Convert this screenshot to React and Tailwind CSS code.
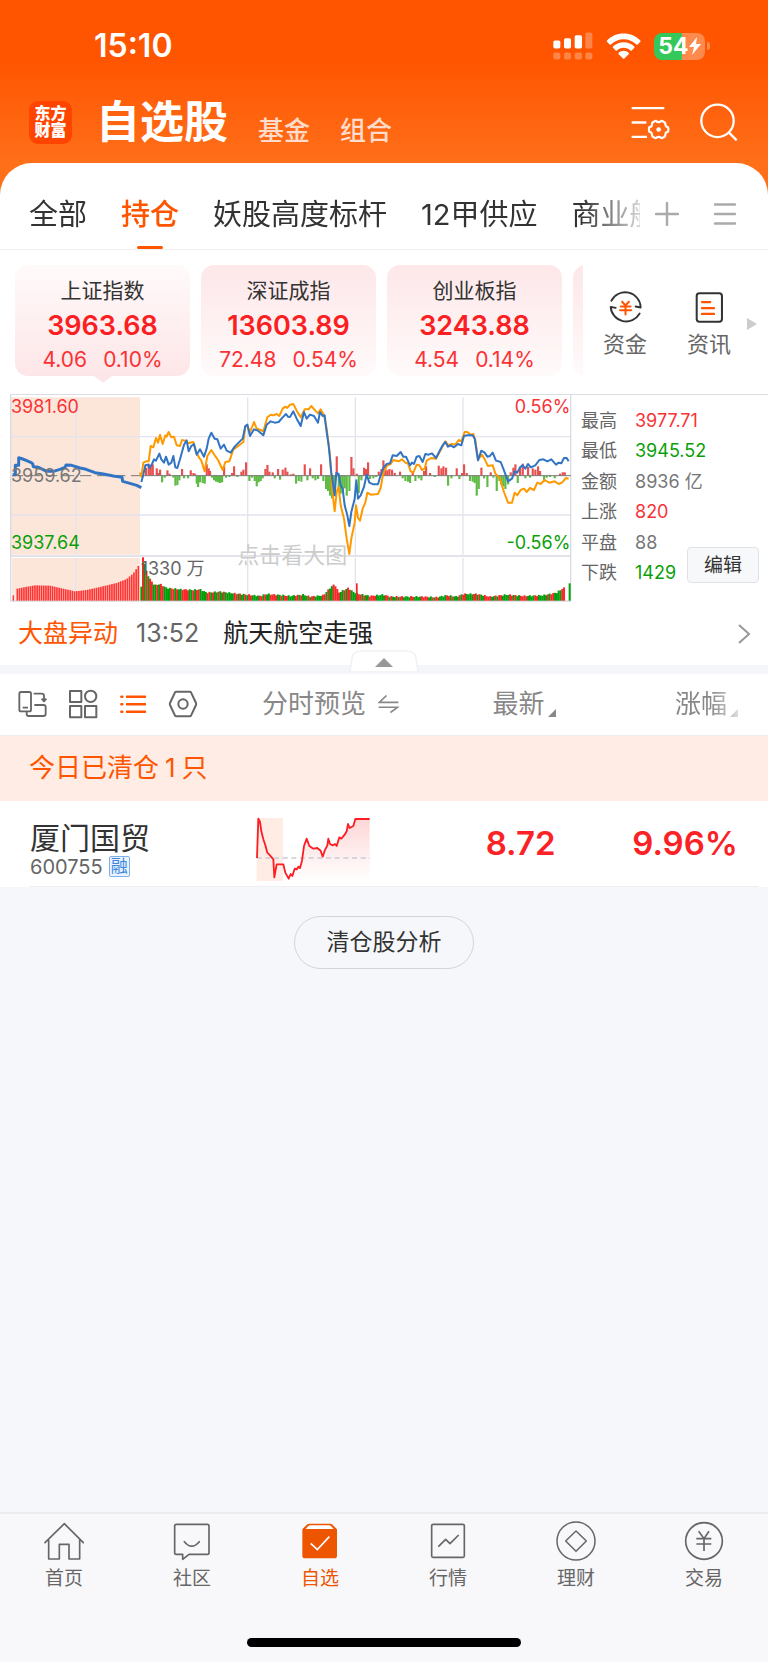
import React from "react";

function Drawing({ box, className, children, ...rest }) {
  return (
    <svg viewBox={box} className={className} fill="none" aria-hidden="true" {...rest}>
      {children}
    </svg>
  );
}

/* ---------- header ---------- */

function StatusBar() {
  return (
    <div className="flex h-[92px] items-center justify-between pr-[58px] pl-[94px] text-white">
      <span className="text-[32px] leading-none font-semibold">15:10</span>
      <div className="flex items-center gap-[13px]">
        <Drawing box="506 95 120 83" className="h-7 w-10" fill="#fff">
          <g fill="#fff">
            <rect x="507" y="120" width="21" height="24" rx="5" />
            <rect x="539" y="113" width="21" height="31" rx="5" />
            <rect x="571" y="104" width="22" height="40" rx="5" />
            <g opacity=".28">
              <rect x="603" y="96" width="21" height="48" rx="5" />
              <rect x="507" y="156" width="21" height="21" rx="6" />
              <rect x="539" y="156" width="21" height="21" rx="6" />
              <rect x="571" y="156" width="22" height="21" rx="6" />
              <rect x="603" y="156" width="21" height="21" rx="6" />
            </g>
          </g>
        </Drawing>
        <Drawing box="664 96 105 80" className="h-[27px] w-[35px]">
          <g fill="#fff">
            <path d="M717 97c20 0 38 8 50 21 1 1 1 3 0 4l-8 8c-1 1-3 1-4 0-10-10-23-16-38-16s-28 6-38 16c-1 1-3 1-4 0l-8-8c-1-1-1-3 0-4 12-13 30-21 50-21z" />
            <path d="M717 123c13 0 24 5 32 13 1 1 1 3 0 4l-8 8c-1 1-3 1-4 0-5-5-12-8-20-8s-15 3-20 8c-1 1-3 1-4 0l-8-8c-1-1-1-3 0-4 8-8 19-13 32-13z" />
            <path d="M717 149c6 0 11 2 15 6 1 1 1 3 0 4l-13 13c-1 1-3 1-4 0l-13-13c-1-1-1-3 0-4 4-4 9-6 15-6z" />
          </g>
        </Drawing>
        <div className="flex items-center gap-0.5">
          <div className="flex h-[27px] w-[51px] items-center justify-center rounded-lg bg-[linear-gradient(90deg,#34c759_54%,#ff8a4d_54%)]">
            <span className="text-[23px] leading-none font-bold">54</span>
            <Drawing box="0 0 12 18" className="h-[18px] w-3">
              <path d="M8 0 0 10h5l-2 8 9-11H7z" fill="#fff" />
            </Drawing>
          </div>
          <span className="h-2 w-[3px] rounded-r-full bg-[#ff8a4d]" />
        </div>
      </div>
    </div>
  );
}

function TitleBar() {
  return (
    <header className="mb-[11px] flex h-[60px] items-center pr-[30px] pl-[29px] text-white">
      <a
        href="#home"
        className="flex size-[43px] flex-col items-center justify-center rounded-[9px] bg-[#ff4400] text-[16px] leading-[17px] font-black"
      >
        <span>东方</span>
        <span>财富</span>
      </a>
      <nav className="ml-6 flex items-end gap-[30px]">
        <h1 className="text-[44px] leading-[44px] font-bold">自选股</h1>
        <a href="#funds" className="text-[26px] leading-[26px] font-medium text-[#ffdccb]">基金</a>
        <a href="#groups" className="text-[26px] leading-[26px] font-medium text-[#ffdccb]">组合</a>
      </nav>
      <div className="ml-auto flex items-center gap-[30px]">
        <button aria-label="设置">
          <Drawing box="740 312 117 110" className="h-[37px] w-[39px]">
            <g stroke="#fff" strokeWidth="7">
              <path d="M742 324h98M742 367h44M742 410h46" />
              <path
                strokeLinejoin="round"
                strokeWidth="6.5"
                d="M811 363q4-2 6 1 6 4 12 0 2-3 6-1l6 4q3 2 2 6 1 6 5 7 4 0 4 4v8q0 4-4 4-5 1-5 7 1 4-2 6l-6 4q-4 2-6-1-6-4-12 0-2 3-6 1l-6-4q-3-2-2-6-1-6-5-7-4 0-4-4v-8q0-4 4-4 5-1 5-7-1-4 2-6z"
              />
            </g>
            <circle cx="823" cy="388" r="7" fill="#fff" />
          </Drawing>
        </button>
        <button aria-label="搜索">
          <Drawing box="945 307 115 115" className="size-[38px]">
            <g stroke="#fff" strokeWidth="7">
              <circle cx="998" cy="361" r="49" />
              <path d="m1032 396 24 24" />
            </g>
          </Drawing>
        </button>
      </div>
    </header>
  );
}

const groups = ["全部", "持仓", "妖股高度标杆", "12甲供应", "商业航天"];

function GroupTabs() {
  return (
    <div className="flex h-[87px] items-stretch rounded-t-[32px] border-b border-[#f0f0f0] bg-white pt-4 pr-[31px]">
      <nav className="flex min-w-0 flex-1 gap-[34px] overflow-hidden pl-[29px] [mask-image:linear-gradient(90deg,#000_91%,rgba(0,0,0,0.2))]">
        {groups.map((name, i) => (
          <button
            key={name}
            className={
              i === 1
                ? "relative shrink-0 text-[29px] leading-none font-medium text-[#ff5500]"
                : "shrink-0 text-[29px] leading-none whitespace-nowrap text-[#333]"
            }
          >
            {name}
            {i === 1 && (
              <span className="absolute bottom-0 left-1/2 h-[3px] w-[26px] -translate-x-1/2 rounded-full bg-[#ff5500]" />
            )}
          </button>
        ))}
      </nav>
      <div className="flex items-center gap-[34px] pl-[15px]">
        <button aria-label="添加分组">
          <Drawing box="0 0 24 24" className="size-6">
            <path d="M12 1v22M1 12h22" stroke="#aaa" strokeWidth="2.4" strokeLinecap="round" />
          </Drawing>
        </button>
        <button aria-label="分组列表">
          <Drawing box="0 0 24 24" className="size-6">
            <path d="M2 2.500h20M2 12h20M2 21.500h20" stroke="#aaa" strokeWidth="2.4" strokeLinecap="round" />
          </Drawing>
        </button>
      </div>
    </div>
  );
}

/* ---------- indices ---------- */

const indices = [
  { name: "上证指数", value: "3963.68", diff: "4.06", pct: "0.10%" },
  { name: "深证成指", value: "13603.89", diff: "72.48", pct: "0.54%" },
  { name: "创业板指", value: "3243.88", diff: "4.54", pct: "0.14%" },
];

function IndexCards() {
  return (
    <section className="flex">
      <div className="flex min-w-0 flex-1 gap-[11px] overflow-hidden pt-[15px] pb-[18px] pl-[15px]">
        {indices.map((item, i) => (
          <button
            key={item.name}
            className={
              i === 0
                ? "relative h-[111px] w-[175px] shrink-0 rounded-[13px] bg-linear-to-b from-[#fffafa] to-[#fde6e8] pt-2"
                : "relative h-[111px] w-[175px] shrink-0 rounded-[13px] bg-linear-to-b from-[#fde7e9] to-[#fffafa] pt-2"
            }
          >
            <span className="block text-[21px] leading-[30px] text-[#333]">{item.name}</span>
            <span className="block text-[27px] leading-10 font-semibold text-[#f91f22]">{item.value}</span>
            <span className="flex justify-center gap-4 text-[21px] leading-7 text-[#fa3236]">
              <span>{item.diff}</span>
              <span>{item.pct}</span>
            </span>
            {i === 0 && (
              <Drawing box="0 0 18 7" className="absolute top-full left-1/2 h-[7px] w-[18px] -translate-x-1/2">
                <path d="M0 0h18L10 6q-1 1-2 0z" fill="#fde6e8" />
              </Drawing>
            )}
          </button>
        ))}
        <div className="h-[111px] w-[175px] shrink-0 rounded-[13px] bg-linear-to-b from-[#fde7e9] to-[#fffafa]" />
      </div>
      <div className="flex w-[185px] items-center pt-1 text-[22px] leading-7 text-[#666]">
        <button className="flex w-[84px] flex-col items-center gap-1.5">
          <Drawing box="674 109 98 98" className="size-[33px]">
            <g stroke="#333" strokeWidth="5.500" strokeLinecap="round" strokeLinejoin="round">
              <path d="M681 138a46 46 0 0 1 87 20l-15-3" />
              <path d="M765 176a46 46 0 0 1-86-20l15 3" />
            </g>
            <path d="m713 141 10 11 10-11M709 155h29M707 166h33M723 152v27" stroke="#ff5500" strokeWidth="6" strokeLinecap="round" />
          </Drawing>
          资金
        </button>
        <button className="flex w-[84px] flex-col items-center gap-1.5">
          <Drawing box="928 109 98 98" className="size-[33px]">
            <rect x="939" y="116" width="75" height="84" rx="8" stroke="#333" strokeWidth="6" />
            <path d="M955 142h24M955 160h35M955 177h35" stroke="#ff5500" strokeWidth="7" strokeLinecap="round" />
          </Drawing>
          资讯
        </button>
        <Drawing box="0 0 10 12" className="-ml-1 h-3 w-2.5">
          <path d="M0 0v12l10-6z" fill="#ccc" />
        </Drawing>
      </div>
    </section>
  );
}

/* ---------- intraday chart ---------- */

const preOpen =
  "38,268 46,268 46,240 56,240 56,217 68,221 80,226 92,231 98,235 100,244 115,246 128,252 140,258 160,258 180,252 195,246 198,239 215,240 240,248 258,252 285,262 310,266 340,272 366,276 368,288 390,294 410,300 424,307";

const indexLine =
  "424,290 430,268 436,240 444,238 448,248 456,236 462,222 468,226 478,205 484,222 492,232 498,214 506,238 514,232 520,212 526,246 532,248 540,222 546,200 552,178 560,165 566,198 574,182 582,176 590,208 600,192 612,214 620,190 626,160 634,142 644,160 652,162 662,190 672,178 680,196 692,202 704,184 716,172 728,160 736,122 742,118 750,152 762,132 774,136 790,150 800,118 812,108 824,112 836,110 848,96 858,86 864,94 870,95 880,78 890,100 902,122 912,80 920,100 930,88 942,92 954,112 960,80 968,92 974,90 980,140 986,180 994,262 1004,330 1009,262 1016,266 1022,300 1028,310 1034,360 1042,390 1048,422 1054,380 1064,340 1069,285 1074,340 1082,330 1092,305 1100,268 1108,292 1120,297 1134,297 1142,270 1150,248 1160,236 1170,234 1178,210 1190,212 1202,200 1210,214 1218,214 1230,240 1236,232 1242,236 1250,214 1258,212 1268,230 1276,206 1286,208 1296,204 1308,218 1320,195 1328,180 1336,170 1344,184 1352,180 1362,186 1374,176 1384,180 1392,152 1402,150 1418,150 1424,160 1434,225 1444,196 1454,202 1462,214 1470,212 1478,202 1488,226 1502,230 1510,250 1524,288 1536,280 1544,258 1552,262 1560,246 1568,240 1576,250 1584,236 1592,246 1606,240 1618,224 1630,222 1642,228 1654,222 1668,238 1676,232 1684,234 1692,218 1700,218 1706,228";

const leadLine =
  "420,262 424,274 430,232 438,228 446,228 452,182 460,186 468,158 474,172 480,148 488,176 496,150 500,154 506,140 514,156 522,154 530,180 540,182 546,164 556,166 564,174 580,170 588,200 598,218 604,226 614,258 622,212 634,194 644,210 654,224 668,254 676,230 688,228 700,192 712,184 722,176 730,170 736,124 742,120 750,140 762,110 770,130 782,134 790,138 802,96 812,88 820,90 830,86 838,92 848,70 856,64 862,68 870,58 880,56 890,76 902,96 914,72 926,72 934,62 946,76 954,84 962,72 972,90 980,130 990,210 996,310 1004,378 1010,320 1016,305 1022,360 1032,400 1040,460 1048,506 1054,460 1064,412 1068,360 1074,398 1080,406 1088,370 1096,352 1102,322 1112,328 1134,326 1142,308 1150,262 1162,240 1172,236 1180,224 1196,228 1206,222 1216,232 1224,234 1232,258 1240,262 1250,238 1258,240 1266,254 1274,250 1280,226 1294,218 1308,220 1322,194 1336,168 1346,180 1356,176 1366,178 1376,164 1384,168 1394,140 1402,140 1412,148 1420,146 1426,164 1434,222 1446,208 1454,222 1464,242 1478,240 1486,264 1500,280 1512,320 1524,352 1536,352 1544,322 1552,330 1562,314 1572,310 1580,320 1590,308 1602,314 1612,292 1622,296 1634,284 1648,292 1664,288 1676,296 1686,292 1698,278 1706,280";

// [x, height]: positive heights rise above the zero line, negative ones fall below it
const momentum = [
  [438, 24], [446, 36], [452, 30], [458, 34], [470, 22], [474, 8], [480, 18], [486, -20], [494, -6], [502, 16], [508, 6],
  [520, -6], [526, -30], [532, -28], [538, -14], [546, 20], [552, -8], [564, -8], [572, 16], [580, 8], [584, 6],
  [590, -24], [594, -34], [600, -20], [608, -22], [614, -24], [620, 34], [626, 22], [630, 14], [636, -6], [642, -14],
  [648, -18], [654, -20], [660, -22], [666, -20], [672, 28], [678, -6], [688, -4], [696, 8], [702, 28], [712, -4],
  [724, 12], [730, 18], [738, 40], [748, -16], [756, -6], [764, -16], [770, -32], [776, -20], [782, -16], [788, -8],
  [796, 20], [802, 32], [808, 12], [818, 10], [824, -8], [834, 20], [840, -12], [848, 18], [856, 24], [862, 12],
  [872, 4], [880, 6], [888, -24], [896, -16], [904, -18], [914, 34], [922, -14], [930, 22], [938, -8], [946, -14],
  [954, -10], [963, 34], [970, -16], [978, -40], [984, -46], [990, -60], [996, -68], [1002, -60], [1010, 58], [1016, -40],
  [1022, -54], [1028, -44], [1034, -38], [1040, -60], [1048, -46], [1054, 56], [1060, 22], [1070, 6], [1076, -52], [1084, -14],
  [1092, 24], [1098, 20], [1104, 40], [1110, -10], [1120, -8], [1128, -4], [1136, 12], [1144, 20], [1150, 46], [1156, 30],
  [1162, 16], [1168, 20], [1176, 18], [1184, 8], [1200, 12], [1208, -8], [1216, -16], [1224, -18], [1230, -22], [1238, 10],
  [1246, -16], [1256, -8], [1264, -14], [1272, 14], [1278, 28], [1290, 8], [1304, -4], [1316, 30], [1324, 22], [1330, 28],
  [1338, 24], [1344, -30], [1354, -8], [1370, 22], [1378, -10], [1386, 8], [1392, 34], [1400, 8], [1410, -16], [1418, -18],
  [1424, -22], [1430, -60], [1436, -40], [1444, 24], [1452, -8], [1462, -34], [1472, 10], [1480, -6], [1490, -46],
  [1498, -16], [1504, -28], [1510, -32], [1516, -40], [1524, -26], [1532, 10], [1540, 24], [1546, 34], [1553, -22],
  [1560, 24], [1568, 36], [1576, -8], [1584, 26], [1590, -6], [1598, 22], [1606, 18], [1614, 28], [1620, 14], [1632, -18],
  [1640, -6], [1650, -4], [1664, -8], [1680, 6], [1688, 10], [1694, 10],
];

const preVolume = [[52, 36], [76, 41], [105, 46], [150, 45], [190, 36], [225, 28], [260, 32], [300, 41], [350, 53], [380, 65], [400, 82], [415, 104]];

const volume = [
  [434, 110], [440, 86], [448, 68], [456, 56], [464, 46], [480, 50], [500, 38], [540, 34], [580, 32], [600, 34], [620, 24],
  [660, 27], [700, 22], [740, 18], [780, 14], [800, 20], [850, 16], [870, 14], [910, 18], [930, 12], [970, 16], [990, 38],
  [1004, 50], [1016, 24], [1045, 38], [1060, 26], [1076, 20], [1110, 14], [1150, 18], [1170, 12], [1270, 12], [1310, 10],
  [1340, 16], [1370, 12], [1390, 20], [1430, 20], [1470, 12], [1520, 18], [1570, 14], [1630, 16], [1670, 24], [1690, 38],
];

function valueAt(points, x) {
  for (let i = 1; i < points.length; i += 1) {
    const [x0, y0] = points[i - 1];
    const [x1, y1] = points[i];
    if (x <= x1) return y0 + ((y1 - y0) * (x - x0)) / (x1 - x0);
  }
  return points[points.length - 1][1];
}

const steps = (from, to, step) =>
  Array.from({ length: Math.floor((to - from) / step) + 1 }, (_, i) => from + i * step);

function IntradayChart() {
  return (
    <svg viewBox="30 29 1686 623" className="block min-w-0 flex-1" fill="none" role="img" aria-label="上证指数分时图">
      <path d="M32 36h388v472H32zM36 518h384v128H36z" fill="#fce6da" />
      <g stroke="#e4e4ee" strokeWidth="4">
        <path d="M32 154H1713M32 389H1713M227 36V508M227 518V646M743 36V508M743 518V646M1066 36V508M1066 518V646M1389 36V508M1389 518V646" />
        <path d="M32 27V648M1712 27V648M32 512H1713M32 647H1713" stroke="#d9dbe2" />
      </g>
      <text x="712" y="534" fontSize="66" fill="#ccc">点击看大图</text>

      {momentum.map(([x, h]) => (
        <rect key={x} x={x - 3} y={h > 0 ? 271 - h : 271} width="6.500" height={Math.abs(h)} fill={h > 0 ? "#e84f4f" : "#5fbb46"} />
      ))}
      <path d="M425 271H1713" stroke="#777" strokeWidth="3" />
      <path d="M36 271H420" stroke="#777" strokeWidth="3" strokeDasharray="34 17" />

      {steps(52, 415, 6.6).map((x) => {
        const h = valueAt(preVolume, x);
        return <rect key={x} x={x - 2.5} y={646 - h} width="5" height={h} fill="#f33" />;
      })}
      <rect x="38" y="630" width="4" height="16" fill="#f33" />
      <rect x="421" y="604" width="5" height="42" fill="#00a000" />
      <rect x="426" y="516" width="6" height="130" fill="#f22" />
      {steps(434, 1694, 5.4).map((x, i) => {
        const h = valueAt(volume, x) + Math.sin(i * 2.3) * 2;
        const rising = Math.sin(i * 0.9) + Math.sin(i * 2.17) > 0.1;
        return <rect key={x} x={x - 3} y={646 - h} width="6" height={h} fill={rising ? "#f8262a" : "#009f0a"} />;
      })}
      <rect x="1068" y="594" width="5" height="52" fill="#f8262a" />
      <rect x="1706" y="594" width="6" height="52" fill="#009f0a" />

      <polyline points={leadLine} stroke="#ff9900" strokeWidth="6" strokeLinejoin="round" />
      <polyline points={indexLine} stroke="#3274c4" strokeWidth="6" strokeLinejoin="round" />
      <polyline points={preOpen} stroke="#3274c4" strokeWidth="9" strokeLinejoin="round" />

      <g fontSize="54">
        <text x="33" y="84" fill="#f93236">3981.60</text>
        <text x="33" y="289" fill="#777">3959.62</text>
        <text x="33" y="492" fill="#0a9f0a">3937.64</text>
        <text x="1711" y="84" textAnchor="end" fill="#f93236">0.56%</text>
        <text x="1711" y="492" textAnchor="end" fill="#0a9f0a">-0.56%</text>
        <text x="422" y="570" fill="#666">1330 万</text>
      </g>
    </svg>
  );
}

const stats = [
  ["最高", "3977.71", "text-[#f93236]"],
  ["最低", "3945.52", "text-[#0a9f0a]"],
  ["金额", "8936 亿", "text-[#777]"],
  ["上涨", "820", "text-[#f93236]"],
  ["平盘", "88", "text-[#777]"],
  ["下跌", "1429", "text-[#0a9f0a]"],
];

function MarketPanel() {
  return (
    <section className="ml-[10px] flex border-t border-[#dcdde3]">
      <IntradayChart />
      <div className="relative w-[196px] pt-[10px] pl-[9px]">
        <dl className="grid h-[183px] grid-rows-6 text-[18px]">
          {stats.map(([label, value, tone]) => (
            <div key={label} className="flex items-center">
              <dt className="w-[54px] text-[#666]">{label}</dt>
              <dd className={tone}>{value}</dd>
            </div>
          ))}
        </dl>
        <button className="absolute top-[152px] right-[9px] h-9 w-[72px] rounded border border-[#dfe2e8] bg-[#f7f8fa] text-[19px] leading-none text-[#333]">
          编辑
        </button>
      </div>
    </section>
  );
}

function NewsRow() {
  return (
    <>
      <a href="#news" className="flex h-[62px] items-center pr-[18px] pl-[18px] text-[25px] leading-none">
        <span className="text-[#ff5500]">大盘异动</span>
        <span className="ml-[18px] text-[#666]">13:52</span>
        <span className="ml-6 text-[#222]">航天航空走强</span>
        <Drawing box="0 0 12 20" className="ml-auto h-5 w-3">
          <path d="m1 1 10 9-10 9" stroke="#999" strokeWidth="2" />
        </Drawing>
      </a>
      <div className="relative h-[9px] bg-[#f5f6f9]">
        <button aria-label="收起" className="absolute -top-[15px] left-1/2 -translate-x-1/2">
          <Drawing box="0 0 70 22" className="h-[22px] w-[70px]">
            <path d="M1 22 3 8q1-7 9-7h46q8 0 9 7l2 14z" fill="#fff" stroke="#f0f1f4" strokeWidth="1.500" />
            <path d="m26 17 9-9 9 9z" fill="#999" />
          </Drawing>
        </button>
      </div>
    </>
  );
}

/* ---------- holdings ---------- */

function ViewButtons() {
  return (
    <div className="flex items-center gap-5 pl-[18px]">
      <button aria-label="横屏">
        <Drawing box="57 268 90 90" className="size-[30px]">
          <g stroke="#666" strokeWidth="5.500" strokeLinejoin="round">
            <rect x="61" y="277" width="35" height="58" rx="5" />
            <path d="M71 324h16M104 282h24q7 0 7 7v14M128 297l7 8 7-8M106 316h28q6 0 6 6v20q0 7-7 7H89q-6 0-6-6v-6" />
          </g>
        </Drawing>
      </button>
      <button aria-label="宫格">
        <Drawing box="204 268 90 90" className="size-[30px]">
          <g stroke="#666" strokeWidth="6" strokeLinejoin="round">
            <path d="M210 274h34v33h-34zM210 319h34v34h-34zM255 319h34v34h-34z" />
            <circle cx="272" cy="290" r="17" />
          </g>
        </Drawing>
      </button>
      <button aria-label="列表">
        <Drawing box="352 268 90 90" className="size-[30px]">
          <path d="M379 291h54M379 314h54M379 336h54M362 291h3M362 314h3M362 336h3" stroke="#ff5500" strokeWidth="7.500" strokeLinecap="round" />
        </Drawing>
      </button>
      <button aria-label="设置列表">
        <Drawing box="501 268 90 90" className="size-[30px]">
          <g stroke="#666" strokeWidth="6" strokeLinejoin="round">
            <path d="M526 276h40q3 0 4 2l15 32q1 3 0 6l-15 32q-1 2-4 2h-40q-3 0-4-2l-15-32q-1-3 0-6l15-32q1-2 4-2z" />
            <circle cx="546" cy="313" r="14" />
          </g>
        </Drawing>
      </button>
    </div>
  );
}

function SortMark() {
  return (
    <Drawing box="0 0 8 8" className="ml-[3px] size-2">
      <path d="M8 0v8H0z" fill="#888" />
    </Drawing>
  );
}

const sparkline =
  "771,774 775,656 780,666 784,694 790,718 796,736 802,758 810,766 820,778 823,832 830,793 850,793 856,818 866,836 872,822 877,828 884,806 890,808 896,800 900,804 906,782 912,738 920,716 928,738 940,746 952,744 962,752 968,770 974,752 982,736 985,716 990,732 998,736 1005,732 1010,738 1018,712 1024,716 1034,704 1040,694 1044,672 1049,684 1060,678 1066,657 1109,657";

function Sparkline() {
  return (
    <svg viewBox="768 651 342 192" className="h-16 w-[114px]" fill="none" role="img" aria-label="厦门国贸分时预览">
      <defs>
        <linearGradient id="spark" x1="0" y1="0" x2="0" y2="1">
          <stop offset="0" stopColor="#f91f22" stopOpacity=".18" />
          <stop offset="1" stopColor="#f91f22" stopOpacity="0" />
        </linearGradient>
      </defs>
      <path d="M770 654h79v189h-79z" fill="#ffede5" />
      <polygon points={"849,843 " + sparkline.slice(sparkline.indexOf("850,793")) + " 1109,843"} fill="url(#spark)" />
      <path d="M770 774h340" stroke="#c9ccd4" strokeWidth="4" strokeDasharray="15 11" />
      <polyline points={sparkline} stroke="#fb1f24" strokeWidth="5.500" strokeLinejoin="round" />
    </svg>
  );
}

function Holdings() {
  return (
    <section className="bg-white">
      <table className="w-full table-fixed">
        <thead className="text-[26px] leading-none text-[#888]">
          <tr className="h-[62px]">
            <th className="w-1/3 p-0">
              <ViewButtons />
            </th>
            <th className="w-[19%] p-0 font-normal">
              <button className="flex items-center gap-3 pl-[6px] whitespace-nowrap">
                分时预览
                <Drawing box="1130 282 64 60" className="h-5 w-[21px]">
                  <path d="M1192 307h-58l22-21M1132 322h58l-22 16" stroke="#888" strokeWidth="5" />
                </Drawing>
              </button>
            </th>
            <th className="w-1/5 p-0 font-normal">
              <button className="ml-auto flex items-end">最新<SortMark /></button>
            </th>
            <th className="p-0 pr-[30px] font-normal">
              <button className="ml-auto flex items-end [mask-image:linear-gradient(90deg,#000_55%,rgba(0,0,0,0.3))]">
                涨幅<SortMark />
              </button>
            </th>
          </tr>
        </thead>
        <tbody>
          <tr className="h-[65px] bg-[#ffede5]">
            <td colSpan={4} className="border-t border-[#efebe9] p-0 pl-[29px] text-[26px] leading-none text-[#ff5500]">
              今日已清仓<span className="mx-[6px]">1</span>只
            </td>
          </tr>
          <tr className="h-[85px]">
            <td className="p-0 pt-[19px] pl-[30px] align-top">
              <div className="text-[30px] leading-9 text-[#333]">厦门国贸</div>
              <div className="flex h-[22px] items-center gap-1.5 text-[20px] leading-none text-[#666]">
                600755
                <span className="flex size-[21px] items-center justify-center rounded-xs border border-[#7fb0ee] bg-[#e9f2fd] text-[17px] leading-none text-[#3a86e0]">
                  融
                </span>
              </div>
            </td>
            <td className="p-0 pt-4 align-top">
              <Sparkline />
            </td>
            <td className="p-0 text-right text-[33px] leading-none font-semibold text-[#fb2226]">8.72</td>
            <td className="p-0 pr-[30px] text-right text-[33px] leading-none font-semibold text-[#fb2226]">9.96%</td>
          </tr>
        </tbody>
      </table>
      <div className="mr-[9px] ml-[30px] h-px bg-[#eceef0]" />
    </section>
  );
}

/* ---------- bottom navigation ---------- */

const navItems = [
  {
    label: "首页",
    box: "132 64 120 120",
    art: (
      <g stroke="#666" strokeWidth="5" strokeLinejoin="round" strokeLinecap="round">
        <path d="m135 129 58-57 57 57M146 122v56h32v-44h29v44h32v-56" />
      </g>
    ),
  },
  {
    label: "社区",
    box: "517 64 120 120",
    art: (
      <g stroke="#666" strokeWidth="5" strokeLinejoin="round" strokeLinecap="round">
        <path d="M530 74h93q5 0 5 5v80q0 5-5 5h-55l-19 15v-15h-19q-5 0-5-5V79q0-5 5-5z" />
        <path d="M554 126q22 27 45 0" />
      </g>
    ),
  },
  {
    label: "自选",
    active: true,
    box: "900 64 120 120",
    art: (
      <>
        <path d="m907 89 15-15q2-2 5-2h64q3 0 5 2l15 15v79q0 8-8 8h-88q-8 0-8-8z" fill="#ee5500" />
        <path d="m917 88 8-9q2-2 4-2h59q3 0 5 2l8 9z" fill="#fff" />
        <path d="m932 131 20 19 36-39" stroke="#fff" strokeWidth="5" />
      </>
    ),
  },
  {
    label: "行情",
    box: "132 64 120 120",
    art: (
      <g stroke="#666" strokeWidth="5" strokeLinejoin="round">
        <rect x="143" y="74" width="98" height="99" rx="4" />
        <path d="m163 141 22-22 13 13 26-26" />
      </g>
    ),
  },
  {
    label: "理财",
    box: "516 64 120 120",
    art: (
      <g stroke="#666" strokeWidth="4.500" strokeLinejoin="round">
        <circle cx="576" cy="124" r="57" />
        <path d="m576 94 31 30-31 31-31-31z" />
      </g>
    ),
  },
  {
    label: "交易",
    box: "899 64 120 120",
    art: (
      <g stroke="#666" strokeWidth="5">
        <circle cx="959" cy="124" r="55" />
        <path d="m943 95 16 22 15-22M936 117h45M936 133h45M959 117v37" />
      </g>
    ),
  },
];

function BottomNav() {
  return (
    <footer className="border-t-2 border-[#ebecef] bg-[#f8f8fa]">
      <nav className="grid h-[124px] grid-cols-6 items-start pt-[7px]">
        {navItems.map((item) => (
          <a
            key={item.label}
            href={"#" + item.label}
            className={
              item.active
                ? "flex flex-col items-center gap-1.5 text-[19px] leading-6 text-[#ee5500]"
                : "flex flex-col items-center gap-1.5 text-[19px] leading-6 text-[#666]"
            }
          >
            <Drawing box={item.box} className="size-10">
              {item.art}
            </Drawing>
            {item.label}
          </a>
        ))}
      </nav>
      <div className="mx-auto mb-[15px] h-[9px] w-[274px] rounded-full bg-black" />
    </footer>
  );
}

export default function App() {
  return (
    <div className="flex min-h-screen flex-col bg-[#f6f7fa] font-[Inter,'Noto_Sans_CJK_SC',sans-serif]">
      <div className="bg-[linear-gradient(#ff5500_0px,#ff5500_60px,#ff6f1a_163px)]">
        <StatusBar />
        <TitleBar />
        <GroupTabs />
      </div>
      <main className="flex-1">
        <div className="bg-white">
          <IndexCards />
          <MarketPanel />
          <NewsRow />
        </div>
        <Holdings />
        <div className="flex justify-center pt-[29px]">
          <button className="h-[53px] w-[180px] rounded-full border border-[#d3d4d8] text-[23px] leading-none text-[#333]">
            清仓股分析
          </button>
        </div>
      </main>
      <BottomNav />
    </div>
  );
}
